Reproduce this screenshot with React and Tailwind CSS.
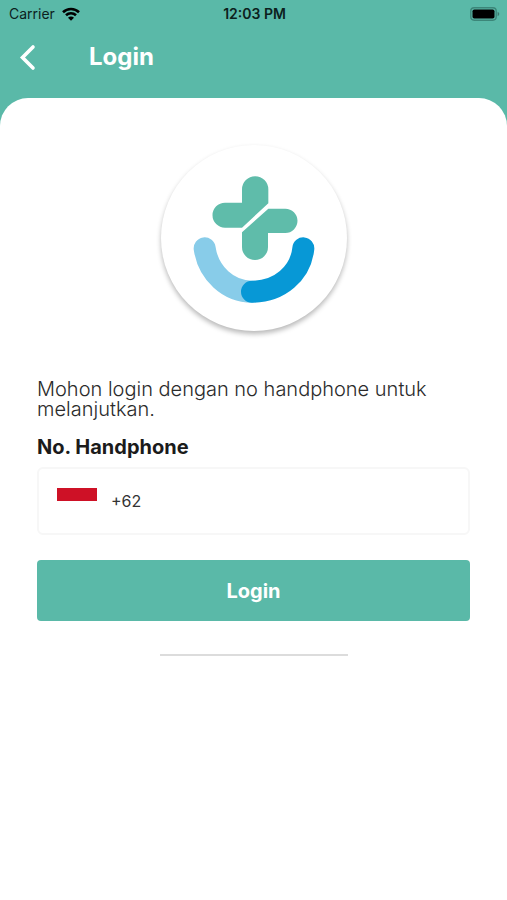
import React, { useState } from 'react';

const StatusBar = () => (
  <div className="grid grid-cols-3 items-center h-7 pl-[9px] pr-[7px] text-sm text-[#0c211d]">
    <div className="flex items-center gap-[7px]">
      <span>Carrier</span>
      <svg width="18" height="14" viewBox="0 0 18 14" fill="none" stroke="#000" strokeWidth="2.6">
        <path d="M1 5.2a11.5 11.5 0 0 1 16 0" />
        <path d="M4 8.3a7.2 7.2 0 0 1 10 0" />
        <path d="M9 13.8L6 10.8a4.2 4.2 0 0 1 6 0z" fill="#000" stroke="none" />
      </svg>
    </div>
    <span className="text-center font-semibold">12:03 PM</span>
    <svg className="justify-self-end" width="30" height="14" viewBox="0 0 30 14" fill="none">
      <rect x="0.8" y="0.8" width="25.4" height="12.4" rx="3.4" stroke="#3c8679" strokeWidth="1.4" />
      <rect x="2.5" y="2.5" width="22" height="9" rx="1.8" fill="#000" />
      <path d="M27.6 4.8c2.2.8 2.2 3.6 0 4.4z" fill="#3c7a6f" />
    </svg>
  </div>
);

const Logo = () => (
  <div className="size-[186px] mx-auto rounded-full bg-white shadow-[0_3px_5px_rgba(0,0,0,0.28)]">
    <svg className="size-full" viewBox="48 45 558 558" fill="none">
      <path d="M291 218V178a39.5 39.5 0 0 1 79 0V220L291 293H240a37.5 37.5 0 0 1 0-75z" fill="#5fbcaa" />
      <path d="M370 236H421a36.5 36.5 0 0 1 0 73H369V351a39 39 0 0 1-78 0V307z" fill="#5fbcaa" />
      <path d="M179 355C190 430 250 485 321 485" stroke="#88cce9" strokeWidth="66" strokeLinecap="round" />
      <path d="M475 355C467 430 404 485 321 485" stroke="#0798d6" strokeWidth="66" strokeLinecap="round" />
    </svg>
  </div>
);

export default function App() {
  const [phone, setPhone] = useState('');

  const handleSubmit = (e) => {
    e.preventDefault();
  };

  return (
    <div className="min-h-screen bg-[#5ab9a8] font-[Inter,sans-serif]">
      <StatusBar />
      <header className="flex items-center gap-12 h-[70px] pl-[17px] pr-4 pb-3">
        <button type="button" aria-label="Kembali" className="text-white">
          <svg width="24" height="28" viewBox="0 0 24 28" fill="none" stroke="currentColor" strokeWidth="3.6" strokeLinecap="round">
            <path d="M16 4L5.5 14.5L16 25" />
          </svg>
        </button>
        <h1 className="text-2xl font-bold text-white">Login</h1>
      </header>

      <main className="min-h-[calc(100vh-98px)] rounded-t-[28px] bg-white px-[37px] pt-[47px]">
        <Logo />
        <form onSubmit={handleSubmit} className="mt-12">
          <p className="text-xl leading-5 font-light text-[#2b2b2b]">
            Mohon login dengan no handphone untuk melanjutkan.
          </p>
          <label htmlFor="phone" className="block mt-[18px] text-xl leading-5 font-bold text-[#1b1b1b]">
            No. Handphone
          </label>
          <div className="flex items-center h-[68px] mt-2.5 px-[18px] rounded-md border-2 border-[#f7f7f7]">
            <span className="flex flex-col w-10 h-[26px]">
              <span className="h-[13px] bg-[#ce1126]"></span>
              <span className="h-[13px] bg-white"></span>
            </span>
            <span className="ml-3.5 text-base text-[#333]">+62</span>
            <input
              id="phone"
              type="tel"
              value={phone}
              onChange={(e) => setPhone(e.target.value)}
              className="flex-1 min-w-0 ml-2 text-base text-[#333] outline-none"
            />
          </div>
          <button type="submit" className="w-full h-[61px] mt-[25px] rounded bg-[#5ab9a8] text-xl font-bold text-white">
            Login
          </button>
        </form>
        <hr className="w-[188px] mx-auto mt-[33px] border-t-2 border-[#dcdcdc]" />
      </main>
    </div>
  );
}
